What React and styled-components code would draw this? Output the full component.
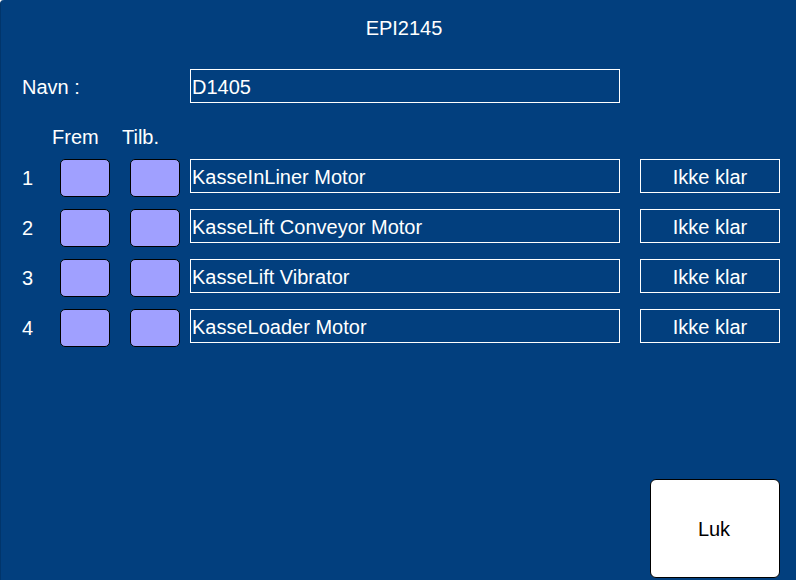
import React from 'react';
import styled, { createGlobalStyle } from 'styled-components';

const rows = [
	{ nr: 1, name: 'KasseInLiner Motor', status: 'Ikke klar' },
	{ nr: 2, name: 'KasseLift Conveyor Motor', status: 'Ikke klar' },
	{ nr: 3, name: 'KasseLift Vibrator', status: 'Ikke klar' },
	{ nr: 4, name: 'KasseLoader Motor', status: 'Ikke klar' },
];

function App() {
	return (
		<>
			<GlobalStyle />
			<Panel>
				<Title>EPI2145</Title>
				<NameRow>
					<Label width={168}>Navn :</Label>
					<Field>D1405</Field>
				</NameRow>
				<HeaderRow>
					<HeadLabel width={70}>Frem</HeadLabel>
					<HeadLabel>Tilb.</HeadLabel>
				</HeaderRow>
				{rows.map(row => (
					<Row key={row.nr}>
						<RowNumber>{row.nr}</RowNumber>
						<SquareButton gap={20} />
						<SquareButton gap={10} />
						<Field>{row.name}</Field>
						<Status>{row.status}</Status>
					</Row>
				))}
				<Footer>
					<CloseButton>Luk</CloseButton>
				</Footer>
			</Panel>
		</>
	);
}

const GlobalStyle = createGlobalStyle`
	html, body {
		margin: 0;
		padding: 0;
		background: #ffffff;
	}
	body {
		font-family: "Liberation Sans", Arial, sans-serif;
	}
`;

const Panel = styled.div`
	width: 796px;
	height: 580px;
	box-sizing: border-box;
	background: #023f7e;
	border-top-left-radius: 4px;
	border-left: 1px solid #01356b;
	display: flex;
	flex-direction: column;
	padding-left: 21px;
	color: #ffffff;
	font-size: 20px;
`;

const Title = styled.div`
	height: 69px;
	line-height: 56px;
	text-align: center;
	padding-right: 10px;
	box-sizing: border-box;
`;

const NameRow = styled.div`
	display: flex;
	align-items: center;
	height: 34px;
`;

const Label = styled.div`
	width: ${props => props.width}px;
	flex: none;
	padding-top: 2px;
`;

const RowNumber = styled.div`
	width: 38px;
	flex: none;
	line-height: 38px;
`;

const Field = styled.div`
	width: 430px;
	height: 34px;
	box-sizing: border-box;
	border: 1px solid #ffffff;
	padding: 2px 0 0 1px;
	line-height: 30px;
	white-space: nowrap;
	flex: none;
`;

const HeaderRow = styled.div`
	display: flex;
	align-items: center;
	height: 56px;
	padding-top: 12px;
	box-sizing: border-box;
	padding-left: 30px;
`;

const HeadLabel = styled.div`
	width: ${props => (props.width ? `${props.width}px` : 'auto')};
`;

const Row = styled.div`
	display: flex;
	align-items: flex-start;
	height: 50px;
`;

const SquareButton = styled.div`
	width: 50px;
	height: 38px;
	box-sizing: border-box;
	background: #a0a0ff;
	border: 1px solid #000000;
	border-radius: 5px;
	margin-right: ${props => props.gap}px;
	flex: none;
`;

const Status = styled.div`
	width: 140px;
	height: 34px;
	margin-left: 20px;
	box-sizing: border-box;
	border: 1px solid #ffffff;
	padding-top: 2px;
	line-height: 30px;
	text-align: center;
	flex: none;
`;

const Footer = styled.div`
	margin-top: auto;
	display: flex;
	justify-content: flex-end;
	padding-right: 16px;
	padding-bottom: 2px;
`;

const CloseButton = styled.div`
	width: 130px;
	height: 99px;
	box-sizing: border-box;
	background: #ffffff;
	border: 1px solid #000000;
	border-radius: 6px;
	color: #000000;
	display: flex;
	align-items: center;
	justify-content: center;
	padding: 2px 2px 0 0;
`;

export default App;
